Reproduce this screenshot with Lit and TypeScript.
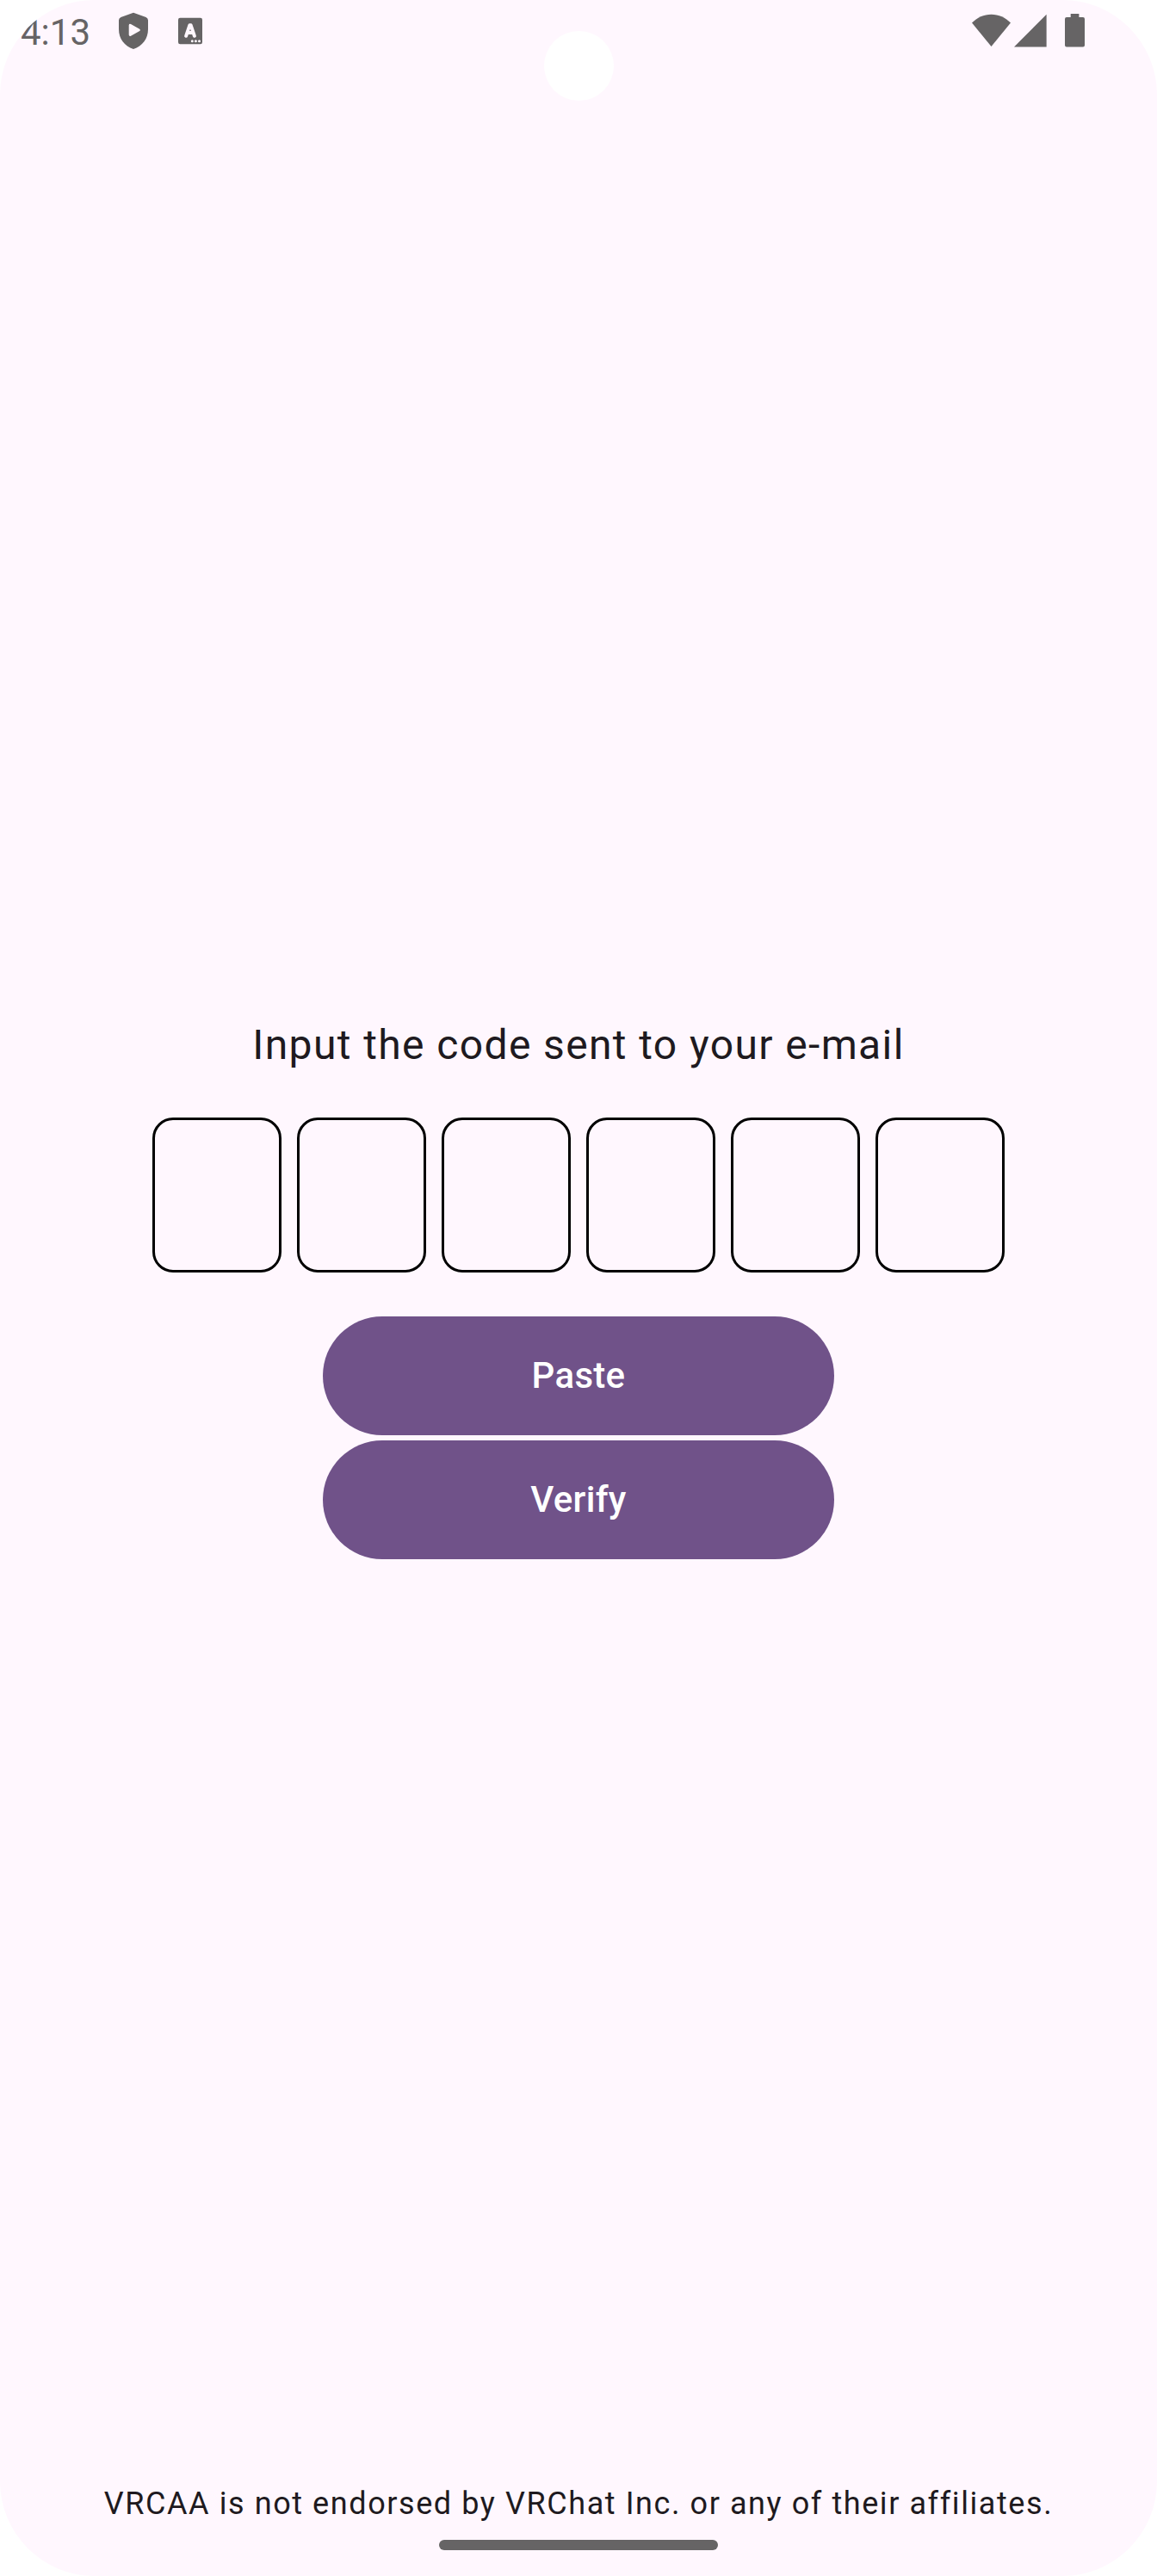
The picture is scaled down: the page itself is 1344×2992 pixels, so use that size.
import { LitElement, html, css } from "lit";
import { customElement, property } from "lit/decorators.js";

@customElement("status-bar")
class StatusBar extends LitElement {
  static styles = css`
    :host {
      display: flex;
      align-items: flex-start;
      justify-content: space-between;
      height: 156px;
      padding: 12px 84px 0 24px;
      box-sizing: border-box;
      color: #666465;
    }
    .group {
      display: flex;
      align-items: center;
      height: 48px;
    }
    .time {
      width: 114px;
      font-size: 42px;
      line-height: 48px;
      padding-top: 3px;
    }
    svg {
      display: block;
      fill: currentColor;
    }
    .shield {
      margin-right: 35px;
    }
    .wifi {
      margin-right: 4px;
    }
    .signal {
      margin-right: 21px;
    }
  `;

  render() {
    return html`
      <div class="group">
        <span class="time">4:13</span>
        <svg class="shield" width="34" height="48" viewBox="0 0 34 48">
          <path
            fill-rule="evenodd"
            d="M17 2.8 31.6 8.1Q34 9.2 34 11.6V22C34 33 27.5 41.5 17 45C6.5 41.5 0 33 0 22V11.6Q0 9.2 2.4 8.1ZM11.7 17.2V28.6Q12 30.6 14 29.8L24.2 24Q25.8 22.9 24.2 21.7L14 16Q12 15.2 11.7 17.2Z"
          />
        </svg>
        <svg width="28" height="48" viewBox="0 0 28 48">
          <rect x="0" y="8.8" width="28" height="30.5" rx="2.2" />
          <path
            d="M9.1 29.8 13.4 17.2H14.6L18.9 29.8M10.8 26H17.2"
            fill="none"
            stroke="#fff7fe"
            stroke-width="4"
            stroke-linecap="round"
            stroke-linejoin="round"
          />
          <g fill="#fff7fe">
            <circle cx="16.3" cy="35.8" r="1.5" />
            <circle cx="20.4" cy="35.8" r="1.5" />
            <circle cx="24.5" cy="35.8" r="1.5" />
          </g>
        </svg>
      </div>
      <div class="group">
        <svg class="wifi" width="45" height="48" viewBox="0 0 45 48">
          <path d="M22.5 42 0 14.6C6 8.4 13.8 4.7 22.5 4.7S39 8.4 45 14.6Z" />
        </svg>
        <svg class="signal" width="38" height="48" viewBox="0 0 38 48">
          <path d="M0 42.4 37.6 4.8V42.4Z" />
        </svg>
        <svg width="23" height="48" viewBox="0 0 23 48">
          <path
            d="M6.7 4H16.4V8H21Q23 8 23 10V40.6Q23 42.6 21 42.6H2Q0 42.6 0 40.6V10Q0 8 2 8H6.7Z"
          />
        </svg>
      </div>
    `;
  }
}

@customElement("code-input")
class CodeInput extends LitElement {
  @property({ type: Number }) length = 6;

  static styles = css`
    :host {
      display: flex;
      gap: 18px;
    }
    .cell {
      box-sizing: border-box;
      width: 150px;
      height: 180px;
      border: 3px solid #000;
      border-radius: 24px;
    }
  `;

  render() {
    return Array.from({ length: this.length }, () => html`<div class="cell"></div>`);
  }
}

@customElement("app-root")
class AppRoot extends LitElement {
  static styles = css`
    :host {
      display: block;
      background: #fff;
      font-family: Roboto, "Liberation Sans", sans-serif;
    }
    .screen {
      position: relative;
      display: flex;
      flex-direction: column;
      align-items: center;
      box-sizing: border-box;
      width: 1344px;
      height: 2992px;
      overflow: hidden;
      border-radius: 110px;
      background: #fff7fe;
      color: #1e1a20;
    }
    status-bar {
      align-self: stretch;
    }
    .camera {
      position: absolute;
      left: 631.5px;
      top: 35.5px;
      width: 81px;
      height: 81px;
      border-radius: 50%;
      background: #fff;
    }
    .form {
      flex: 1;
      display: flex;
      flex-direction: column;
      align-items: center;
      padding-top: 1022px;
    }
    .title {
      margin: 0 0 48px;
      font-size: 48px;
      font-weight: 400;
      line-height: 72px;
      letter-spacing: 1.38px;
    }
    .actions {
      display: flex;
      flex-direction: column;
      gap: 6px;
      margin-top: 51px;
    }
    .button {
      width: 594px;
      height: 138px;
      padding: 0;
      border: 0;
      border-radius: 69px;
      background: #705289;
      color: #fff;
      font-family: inherit;
      font-size: 42px;
      font-weight: 500;
      line-height: 60px;
      letter-spacing: 0.3px;
    }
    .notice {
      font-size: 36px;
      line-height: 48px;
      letter-spacing: 1.58px;
      white-space: nowrap;
    }
    .handle {
      width: 324px;
      height: 12px;
      margin: 18px 0 30px;
      border-radius: 6px;
      background: #666465;
    }
  `;

  render() {
    return html`
      <div class="screen">
        <status-bar></status-bar>
        <div class="camera"></div>
        <main class="form">
          <h1 class="title">Input the code sent to your e-mail</h1>
          <code-input></code-input>
          <div class="actions">
            <button class="button">Paste</button>
            <button class="button">Verify</button>
          </div>
        </main>
        <div class="notice">VRCAA is not endorsed by VRChat Inc. or any of their affiliates.</div>
        <div class="handle"></div>
      </div>
    `;
  }
}
